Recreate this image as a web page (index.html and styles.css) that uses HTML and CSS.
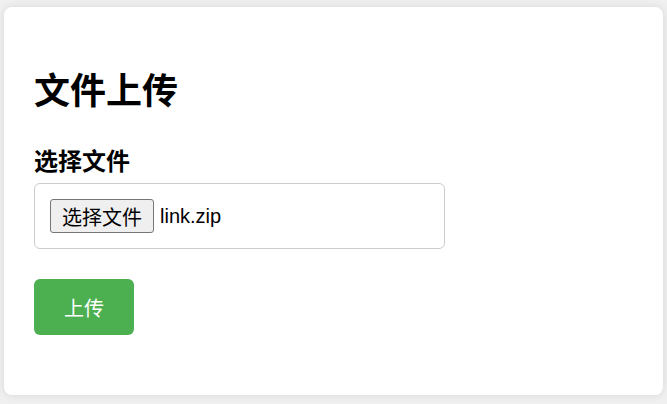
FILE: index.html
```html
<!DOCTYPE html>
<html lang="zh-CN">
  <head>
    <meta charset="UTF-8" />
    <meta name="viewport" content="width=device-width, initial-scale=1.0" />
    <title>文件上传</title>
    <link rel="stylesheet" href="styles.css">
  </head>
  <body>
    <div class="upload-container">
      <h1>文件上传</h1>
      <form class="upload-form" onsubmit="return false">
        <div class="form-group">
          <label class="field-label">选择文件</label>
          <div class="file-box">
            <button type="button" class="file-button">选择文件</button>
            <span class="file-name">link.zip</span>
          </div>
        </div>
        <button type="submit" class="submit-button">上传</button>
      </form>
    </div>
  </body>
</html>
```

FILE: styles.css
```css
body {
  font-family: "Liberation Sans", Arial, "Noto Sans CJK SC", sans-serif;
  margin: 0;
  padding: 7px 4px 10px;
  background: #f0f0f0;
  color: #000;
}
.upload-container {
  background: white;
  padding: 30px;
  border-radius: 8px;
  box-shadow: 0 0 10px rgba(0, 0, 0, 0.1);
}
h1 {
  font-size: 36px;
  font-weight: bold;
  margin: 33px 0 29px;
  line-height: 1.2;
}
.form-group {
  margin-bottom: 30px;
}
.field-label {
  display: block;
  font-size: 24px;
  font-weight: bold;
  margin-bottom: 6px;
}
.file-box {
  display: flex;
  align-items: center;
  width: 411px;
  height: 66px;
  box-sizing: border-box;
  padding: 15px;
  border: 1px solid #ccc;
  border-radius: 6px;
  font-size: 20px;
}
.file-button {
  font-family: inherit;
  font-size: 20px;
  height: 34px;
  padding: 0 11px;
  margin-right: 6px;
  background: #efefef;
  border: 1px solid #767676;
  border-radius: 3px;
  color: #000;
}
.submit-button {
  background: #4caf50;
  color: white;
  border: none;
  width: 100px;
  height: 56px;
  margin-bottom: 30px;
  border-radius: 6px;
  font-family: inherit;
  font-size: 20px;
  cursor: pointer;
}
```
